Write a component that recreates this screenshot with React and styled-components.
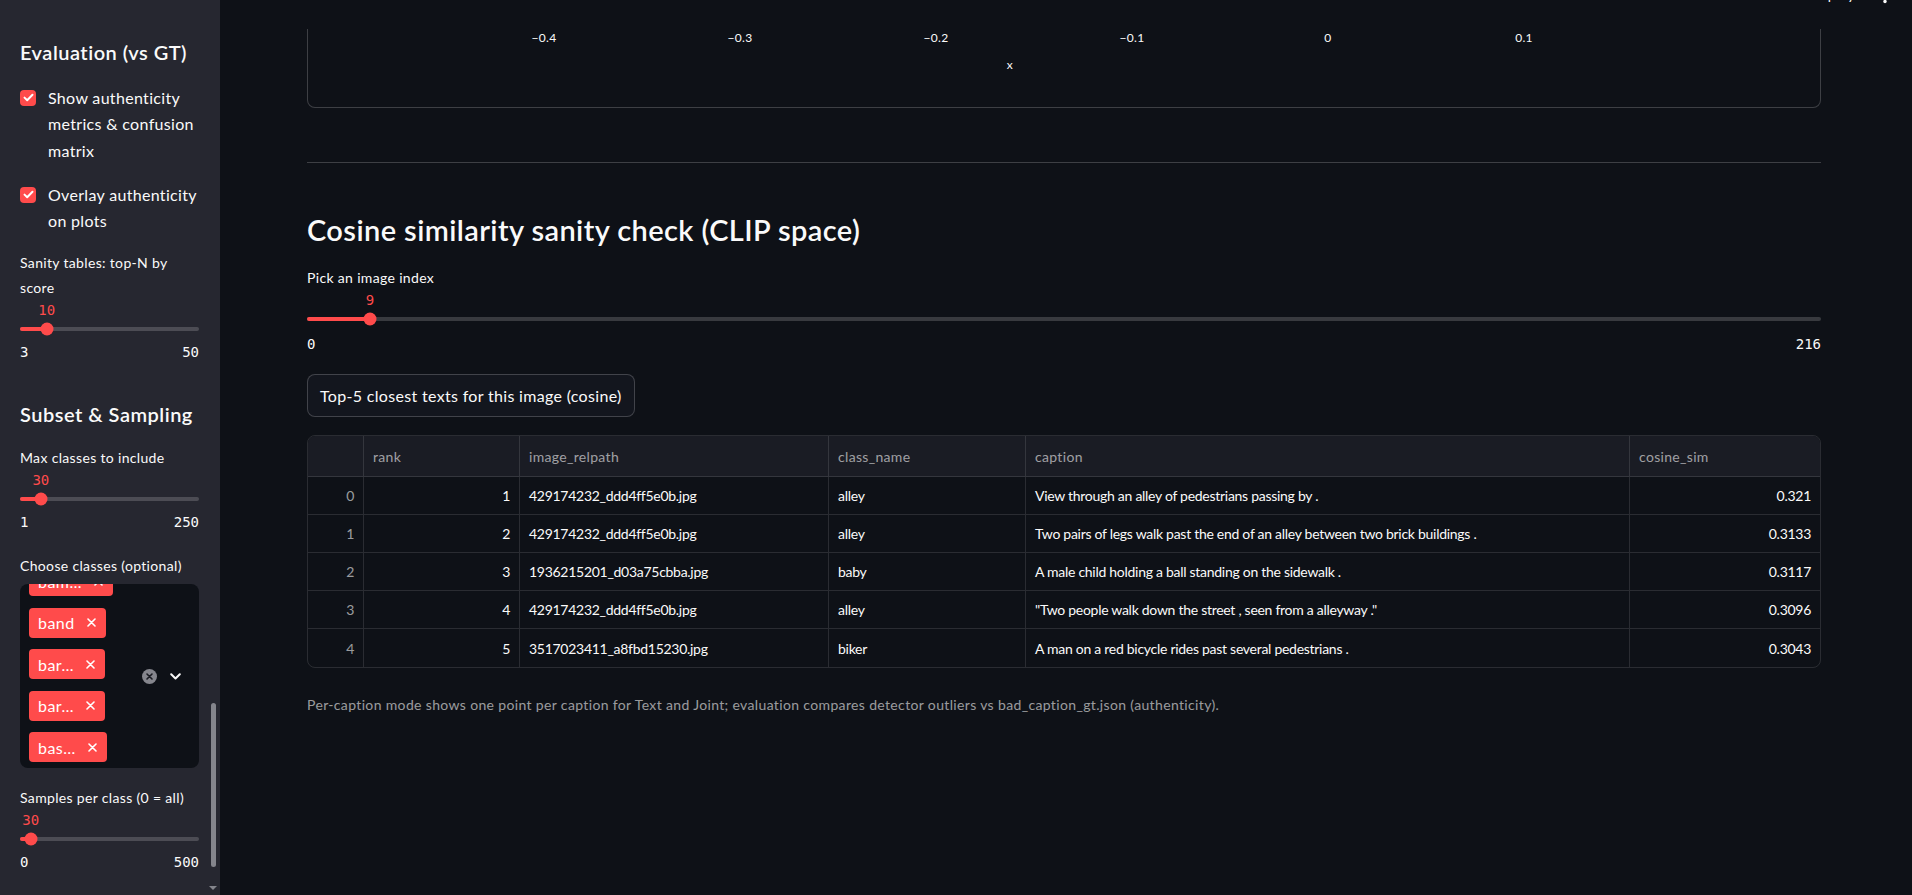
import React from "react";
import styled, { createGlobalStyle } from "styled-components";

const RED = "#ff4b4b";
const LINE = "rgba(250, 250, 250, 0.2)";
const GRID_LINE = "rgba(250, 250, 250, 0.12)";
const MUTED = "rgba(250, 250, 250, 0.6)";

const GlobalStyle = createGlobalStyle`
  * { box-sizing: border-box; }
  html, body { margin: 0; padding: 0; background: #0e1117; }
  body {
    font-family: Lato, "Noto Sans", sans-serif;
    color: #fafafa;
    overflow: hidden;
    letter-spacing: 0.02em;
  }
`;

const Shell = styled.div`
  display: flex;
  width: 1912px;
  height: 895px;
  overflow: hidden;
`;

/* ---------- sidebar ---------- */

const Sidebar = styled.aside`
  position: relative;
  flex: 0 0 220px;
  display: flex;
  flex-direction: column;
  padding: 0 21px 0 20px;
  background: #262730;
  overflow: hidden;
`;

const SideHeading = styled.h2`
  margin: ${(p) => p.$mt}px 0 0;
  font-size: 20px;
  font-weight: 600;
  line-height: 28px;
  letter-spacing: 0.025em;
  white-space: nowrap;
`;

const CheckRow = styled.label`
  display: flex;
  align-items: flex-start;
  margin-top: ${(p) => p.$mt}px;
  font-size: 16px;
  line-height: 26.5px;
  white-space: nowrap;
`;

const CheckBox = styled.span`
  flex: 0 0 16px;
  width: 16px;
  height: 16px;
  margin: 5px 12px 0 0;
  border-radius: 4px;
  background: ${RED};
  display: flex;
  align-items: center;
  justify-content: center;
`;

const WidgetLabel = styled.div`
  margin-top: ${(p) => p.$mt || 0}px;
  font-size: 14px;
  line-height: ${(p) => p.$lh || 25}px;
  letter-spacing: 0.024em;
  white-space: nowrap;
`;

const SliderWrap = styled.div`
  margin-top: ${(p) => p.$mt || 0}px;
  display: flex;
  flex-direction: column;
  font-family: "DejaVu Sans Mono", "Liberation Mono", monospace;
  font-size: 14px;
  letter-spacing: 0;
`;

const ValueRow = styled.div`
  position: relative;
  height: 18px;
`;

const ThumbValue = styled.span`
  position: absolute;
  top: 0;
  line-height: 18px;
  color: ${RED};
  transform: translateX(-50%);
`;

const TrackZone = styled.div`
  height: 20px;
  display: flex;
  align-items: center;
`;

const Track = styled.div`
  position: relative;
  width: 100%;
  height: 4px;
  border-radius: 2px;
  background: rgba(250, 250, 250, 0.18);
`;

const Fill = styled.div`
  position: absolute;
  left: 0;
  top: 0;
  bottom: 0;
  border-radius: 2px;
  background: ${RED};
`;

const Thumb = styled.div`
  position: absolute;
  top: 50%;
  width: 13px;
  height: 13px;
  border-radius: 50%;
  background: ${RED};
  transform: translate(-50%, -50%);
`;

const Ticks = styled.div`
  display: flex;
  justify-content: space-between;
  margin-top: ${(p) => p.$gap}px;
  height: 18px;
  line-height: 18px;
  color: #fafafa;
`;

const MultiBox = styled.div`
  display: flex;
  height: 184px;
  margin-top: ${(p) => p.$mt}px;
  border-radius: 8px;
  background: #0e1117;
  overflow: hidden;
`;

const TagList = styled.div`
  display: flex;
  flex-direction: column;
  align-items: flex-start;
  gap: 11.5px;
  margin-top: -18px;
  padding-left: 9px;
`;

const Tag = styled.span`
  display: inline-flex;
  align-items: center;
  gap: 12px;
  height: 30px;
  padding: 0 10px 0 9px;
  border-radius: 4px;
  background: ${RED};
  color: #fff;
  font-size: 16px;
  letter-spacing: 0.03em;
  white-space: nowrap;
`;

const Controls = styled.div`
  display: flex;
  align-items: center;
  gap: 13px;
  margin-left: auto;
  padding-right: 18px;
`;

const ScrollThumb = styled.div`
  position: absolute;
  right: 4px;
  top: 703px;
  width: 5px;
  height: 164px;
  border-radius: 3px;
  background: #84858c;
`;

const ScrollArrow = styled.div`
  position: absolute;
  right: 3px;
  top: 886px;
  width: 0;
  height: 0;
  border-left: 4px solid transparent;
  border-right: 4px solid transparent;
  border-top: 4px solid #84858c;
`;

/* ---------- main ---------- */

const Main = styled.main`
  flex: 1;
  display: flex;
  flex-direction: column;
`;

const TopBar = styled.header`
  height: 29px;
  overflow: hidden;
  display: flex;
  justify-content: flex-end;
  padding-right: 25px;
`;

const TopBarInner = styled.div`
  display: flex;
  align-items: flex-start;
  gap: 28px;
  margin-top: -15px;
  font-size: 14px;
  line-height: 20px;
`;

const Content = styled.div`
  width: 1514px;
  margin-left: 87px;
  display: flex;
  flex-direction: column;
`;

const ChartCard = styled.div`
  height: 79px;
  border: 1px solid ${LINE};
  border-top: none;
  border-radius: 0 0 8px 8px;
`;

const Divider = styled.hr`
  margin: 54px 0 0;
  border: none;
  height: 1px;
  background: ${LINE};
`;

const H3 = styled.h3`
  margin: 49px 0 0;
  font-size: 29px;
  font-weight: 600;
  line-height: 36px;
  letter-spacing: 0.014em;
`;

const Button = styled.button`
  align-self: flex-start;
  height: 43px;
  margin-top: 21px;
  padding: 0 12px;
  border: 1px solid ${LINE};
  border-radius: 8px;
  background: #13161e;
  color: #fafafa;
  font-family: inherit;
  font-size: 16px;
  letter-spacing: inherit;
`;

const TableWrap = styled.div`
  margin-top: 18px;
  border: 1px solid ${GRID_LINE};
  border-radius: 8px;
  overflow: hidden;
`;

const Grid = styled.div`
  display: grid;
  grid-template-columns: 56px 156px 309px 197px 604px 190px;
`;

const HeadCell = styled.div`
  height: 41px;
  display: flex;
  align-items: center;
  padding: 0 9px;
  background: #1a1c24;
  color: ${MUTED};
  font-size: 14px;
  border-bottom: 1px solid ${GRID_LINE};
  border-right: ${(p) => (p.$last ? "none" : `1px solid ${GRID_LINE}`)};
`;

const Cell = styled.div`
  height: 38px;
  display: flex;
  align-items: center;
  justify-content: ${(p) => (p.$right ? "flex-end" : "flex-start")};
  padding: 0 9px;
  color: ${(p) => (p.$muted ? MUTED : "#fafafa")};
  font-size: 14px;
  letter-spacing: -0.02em;
  white-space: nowrap;
  border-bottom: ${(p) => (p.$lastRow ? "none" : `1px solid ${GRID_LINE}`)};
  border-right: ${(p) => (p.$last ? "none" : `1px solid ${GRID_LINE}`)};
`;

const Caption = styled.p`
  margin: 27px 0 0;
  font-size: 14px;
  line-height: 20px;
  letter-spacing: 0.025em;
  color: ${MUTED};
`;

/* ---------- bits ---------- */

function Check() {
  return (
    <svg width="11" height="9" viewBox="0 0 11 9">
      <polyline points="1.5,4.6 4.2,7.2 9.5,1.8" fill="none" stroke="#fff" strokeWidth="2" strokeLinecap="round" strokeLinejoin="round" />
    </svg>
  );
}

function Slider({ value, min, max, mt, gap = 4 }) {
  const pct = ((value - min) / (max - min)) * 100;
  return (
    <SliderWrap $mt={mt}>
      <ValueRow>
        <ThumbValue style={{ left: `${pct}%` }}>{value}</ThumbValue>
      </ValueRow>
      <TrackZone>
        <Track>
          <Fill style={{ width: `${pct}%` }} />
          <Thumb style={{ left: `${pct}%` }} />
        </Track>
      </TrackZone>
      <Ticks $gap={gap}>
        <span>{min}</span>
        <span>{max}</span>
      </Ticks>
    </SliderWrap>
  );
}

function TagX() {
  return (
    <svg width="9" height="9" viewBox="0 0 9 9">
      <path d="M1 1L8 8M8 1L1 8" stroke="#fff" strokeWidth="1.6" strokeLinecap="round" />
    </svg>
  );
}

function ClearIcon() {
  return (
    <svg width="15" height="15" viewBox="0 0 15 15">
      <circle cx="7.5" cy="7.5" r="7.5" fill="#85868d" />
      <path d="M5 5L10 10M10 5L5 10" stroke="#1a1c23" strokeWidth="1.6" strokeLinecap="round" />
    </svg>
  );
}

function Chevron() {
  return (
    <svg width="11" height="7" viewBox="0 0 11 7">
      <polyline points="1.2,1.2 5.5,5.5 9.8,1.2" fill="none" stroke="#fafafa" strokeWidth="2" strokeLinecap="round" strokeLinejoin="round" />
    </svg>
  );
}

function Dots() {
  return (
    <svg width="4" height="20" viewBox="0 0 4 20">
      <circle cx="2" cy="6.5" r="1.7" fill="#fafafa" />
      <circle cx="2" cy="11.5" r="1.7" fill="#fafafa" />
      <circle cx="2" cy="16.5" r="1.7" fill="#fafafa" />
    </svg>
  );
}

const ticks = [-0.4, -0.3, -0.2, -0.1, 0, 0.1];

function Axis() {
  // zero sits at 1020px inside the plot, 196px per 0.1
  const xOf = (v) => 1020 + v * 1960;
  const fmt = (v) => (v < 0 ? "\u2212" + Math.abs(v) : String(v));
  return (
    <svg width="1512" height="79" style={{ display: "block" }}>
      {ticks.map((v) => (
        <text key={v} x={xOf(v)} y="10" textAnchor="middle" dominantBaseline="middle" fill="#fafafa" fontSize="12" fontFamily="Lato, sans-serif">
          {fmt(v)}
        </text>
      ))}
      <text x="702" y="37" textAnchor="middle" dominantBaseline="middle" fill="#fafafa" fontSize="12" fontFamily="Lato, sans-serif">
        x
      </text>
    </svg>
  );
}

const columns = ["", "rank", "image_relpath", "class_name", "caption", "cosine_sim"];

const rows = [
  [0, 1, "429174232_ddd4ff5e0b.jpg", "alley", "View through an alley of pedestrians passing by .", "0.321"],
  [1, 2, "429174232_ddd4ff5e0b.jpg", "alley", "Two pairs of legs walk past the end of an alley between two brick buildings .", "0.3133"],
  [2, 3, "1936215201_d03a75cbba.jpg", "baby", "A male child holding a ball standing on the sidewalk .", "0.3117"],
  [3, 4, "429174232_ddd4ff5e0b.jpg", "alley", "\"Two people walk down the street , seen from a alleyway .\"", "0.3096"],
  [4, 5, "3517023411_a8fbd15230.jpg", "biker", "A man on a red bicycle rides past several pedestrians .", "0.3043"],
];

const tags = ["bam…", "band", "bar…", "bar…", "bas…"];

export default function App() {
  return (
    <Shell>
      <GlobalStyle />
      <Sidebar>
        <SideHeading $mt={37.5}>Evaluation (vs GT)</SideHeading>
        <CheckRow $mt={19.25}>
          <CheckBox><Check /></CheckBox>
          <span>Show authenticity<br />metrics &amp; confusion<br />matrix</span>
        </CheckRow>
        <CheckRow $mt={17.5}>
          <CheckBox><Check /></CheckBox>
          <span>Overlay authenticity<br />on plots</span>
        </CheckRow>
        <WidgetLabel $mt={14.75}>Sanity tables: top-N by<br />score</WidgetLabel>
        <Slider value={10} min={3} max={50} mt={1.5} />

        <SideHeading $mt={38.5}>Subset &amp; Sampling</SideHeading>
        <WidgetLabel $mt={17}>Max classes to include</WidgetLabel>
        <Slider value={30} min={1} max={250} mt={1.5} />

        <WidgetLabel $mt={21.5}>Choose classes (optional)</WidgetLabel>
        <MultiBox $mt={6.5}>
          <TagList>
            {tags.map((t, i) => (
              <Tag key={i}>{t}<TagX /></Tag>
            ))}
          </TagList>
          <Controls>
            <ClearIcon />
            <Chevron />
          </Controls>
        </MultiBox>

        <WidgetLabel $mt={16.5}>Samples per class (0 = all)</WidgetLabel>
        <Slider value={30} min={0} max={500} mt={1.5} />

        <ScrollThumb />
        <ScrollArrow />
      </Sidebar>

      <Main>
        <TopBar>
          <TopBarInner>
            <span>Deploy</span>
            <Dots />
          </TopBarInner>
        </TopBar>
        <Content>
          <ChartCard>
            <Axis />
          </ChartCard>
          <Divider />
          <H3>Cosine similarity sanity check (CLIP space)</H3>
          <WidgetLabel $mt={19} $lh={22}>Pick an image index</WidgetLabel>
          <Slider value={9} min={0} max={216} mt={2} gap={6} />
          <Button>Top-5 closest texts for this image (cosine)</Button>
          <TableWrap>
            <Grid>
              {columns.map((c, i) => (
                <HeadCell key={i} $last={i === columns.length - 1}>{c}</HeadCell>
              ))}
              {rows.map((r, ri) =>
                r.map((v, ci) => (
                  <Cell
                    key={`${ri}-${ci}`}
                    $right={ci === 0 || ci === 1 || ci === 5}
                    $muted={ci === 0}
                    $last={ci === r.length - 1}
                    $lastRow={ri === rows.length - 1}
                  >
                    {v}
                  </Cell>
                ))
              )}
            </Grid>
          </TableWrap>
          <Caption>
            Per-caption mode shows one point per caption for Text and Joint; evaluation compares detector outliers vs bad_caption_gt.json (authenticity).
          </Caption>
        </Content>
      </Main>
    </Shell>
  );
}
